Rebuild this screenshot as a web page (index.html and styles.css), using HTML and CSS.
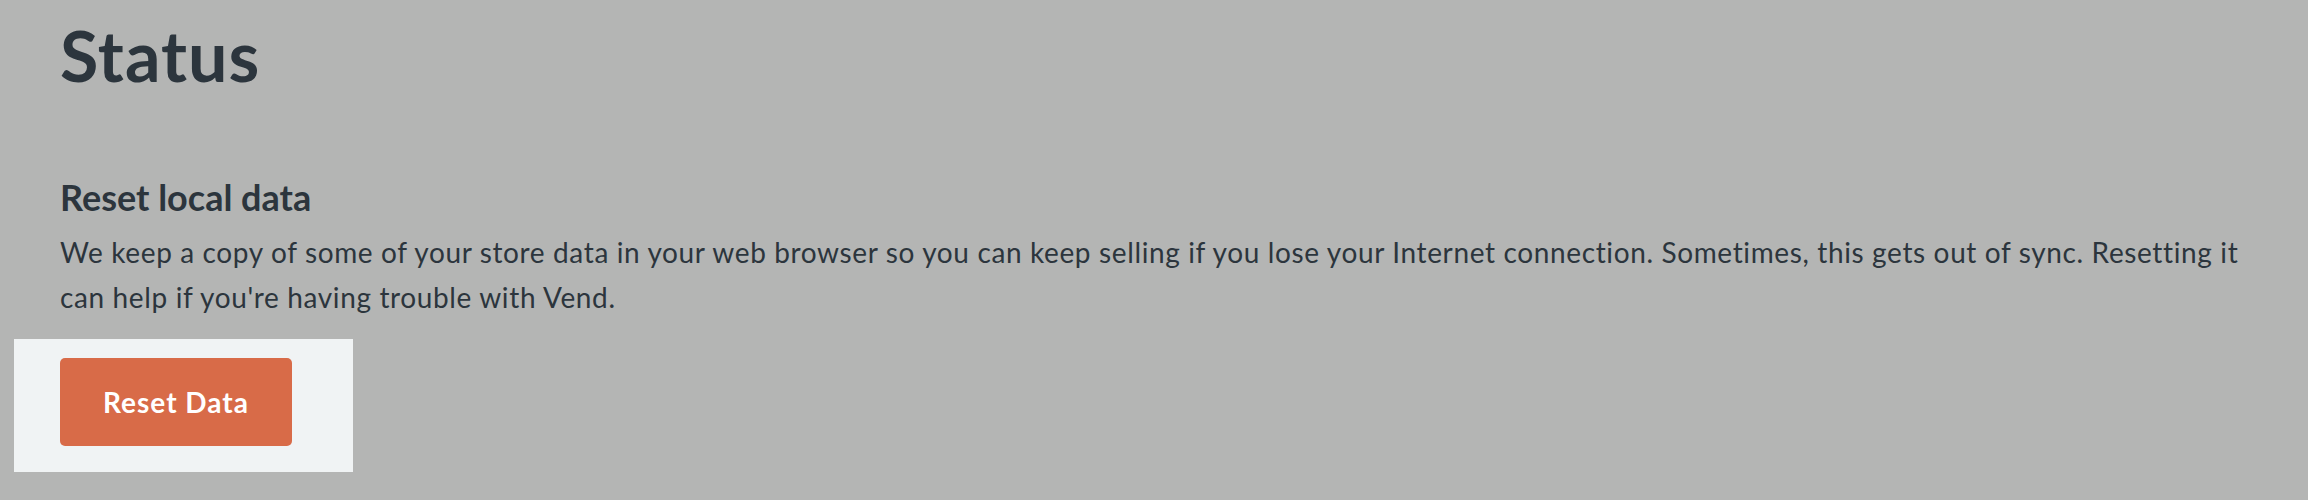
FILE: index.html
```html
<!DOCTYPE html>
<html lang="en">
<head>
<meta charset="utf-8">
<title>Status</title>
<link rel="stylesheet" href="styles.css">
</head>
<body>
<main class="page">
  <h1 class="page-title">Status</h1>
  <section class="reset-section">
    <h2 class="section-title">Reset local data</h2>
    <p class="section-text">We keep a copy of some of your store data in your web browser so you can keep selling if you lose your Internet connection. Sometimes, this gets out of sync. Resetting it can help if you're having trouble with Vend.</p>
    <div class="highlight">
      <button class="btn-reset" type="button">Reset Data</button>
    </div>
  </section>
</main>
</body>
</html>
```

FILE: styles.css
```css
html, body {
  margin: 0;
  padding: 0;
  background: #b4b5b4;
}

body {
  font-family: Lato, "Open Sans", "Liberation Sans", sans-serif;
  color: #2c353d;
  width: 2308px;
  height: 500px;
  overflow: hidden;
}

.page {
  padding: 13px 60px 0 60px;
}

.page-title {
  margin: 0;
  font-size: 70px;
  font-weight: 700;
  line-height: 84px;
  letter-spacing: 1px;
}

.reset-section {
  margin-top: 79px;
}

.section-title {
  margin: 0;
  font-size: 36px;
  font-weight: 700;
  line-height: 43px;
}

.section-text {
  margin: 11px 0 0 0;
  font-size: 28px;
  font-weight: 400;
  line-height: 45px;
  letter-spacing: 0.63px;
}

.highlight {
  display: inline-flex;
  margin: 19px 0 0 -46px;
  padding: 19px 61px 26px 46px;
  background: #f0f3f4;
}

.btn-reset {
  height: 88px;
  padding: 0 43px;
  border: 0;
  border-radius: 5px;
  background: #d86b48;
  color: #ffffff;
  font-family: Lato, "Open Sans", "Liberation Sans", sans-serif;
  font-size: 28px;
  font-weight: 700;
  line-height: 88px;
  letter-spacing: 1px;
  cursor: pointer;
}
```
